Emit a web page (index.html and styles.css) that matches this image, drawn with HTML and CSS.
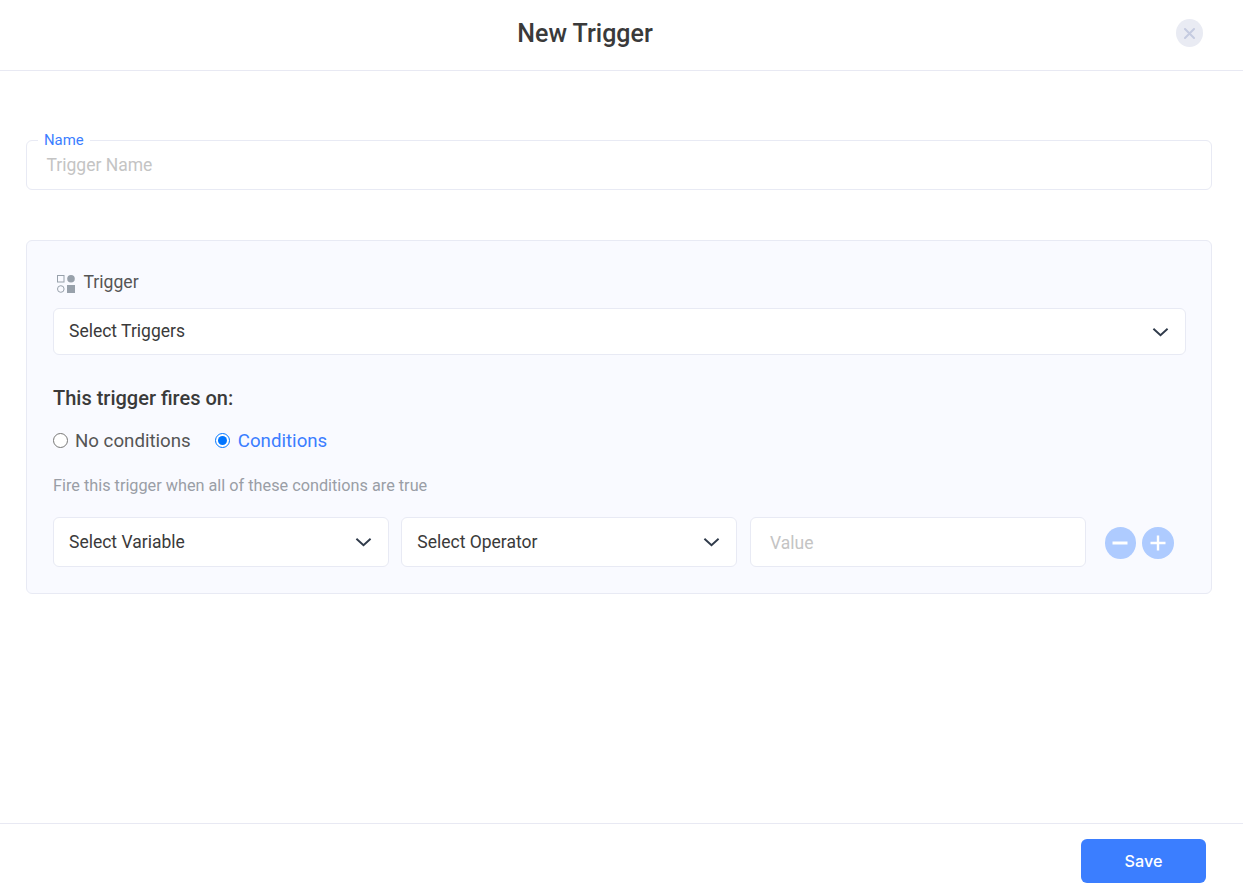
FILE: index.html
```html
<!DOCTYPE html>
<html lang="en">
<head>
<meta charset="utf-8">
<title>New Trigger</title>
<link rel="stylesheet" href="styles.css">
</head>
<body>
<div class="modal">
  <header class="modal-header">
    <h1 class="modal-title">New Trigger</h1>
    <button class="close-btn" type="button" aria-label="Close">
      <svg width="11" height="11" viewBox="0 0 11 11"><path d="M1 1l9 9M10 1l-9 9" stroke="#c5cbe0" stroke-width="2" fill="none" stroke-linecap="round"/></svg>
    </button>
  </header>
  <main class="modal-body">
    <div class="name-field">
      <span class="name-label">Name</span>
      <span class="name-placeholder">Trigger Name</span>
    </div>
    <section class="panel">
      <div class="panel-heading">
        <svg class="panel-icon" width="18" height="18" viewBox="0 0 18 18">
          <rect x="0.5" y="0.5" width="6.5" height="6.5" fill="none" stroke="#98a1ab"/>
          <circle cx="14" cy="3.8" r="3.8" fill="#98a1ab"/>
          <circle cx="3.8" cy="14" r="3.3" fill="none" stroke="#98a1ab"/>
          <rect x="10" y="10" width="8" height="8" fill="#98a1ab"/>
        </svg>
        <span>Trigger</span>
      </div>
      <div class="select select-wide">
        <span>Select Triggers</span>
        <svg class="chevron" width="17" height="10" viewBox="0 0 18 10"><path d="M1.5 1.5L9 8.5l7.5-7" fill="none" stroke="#2f3a4a" stroke-width="2"/></svg>
      </div>
      <h2 class="fires-title">This trigger fires on:</h2>
      <div class="radio-row">
        <label class="radio"><input class="radio-input" type="radio" name="fires">No conditions</label>
        <label class="radio radio-on"><input class="radio-input" type="radio" name="fires" checked>Conditions</label>
      </div>
      <p class="hint">Fire this trigger when all of these conditions are true</p>
      <div class="condition-row">
        <div class="select select-cell">
          <span>Select Variable</span>
          <svg class="chevron" width="17" height="10" viewBox="0 0 18 10"><path d="M1.5 1.5L9 8.5l7.5-7" fill="none" stroke="#2f3a4a" stroke-width="2"/></svg>
        </div>
        <div class="select select-cell">
          <span>Select Operator</span>
          <svg class="chevron" width="17" height="10" viewBox="0 0 18 10"><path d="M1.5 1.5L9 8.5l7.5-7" fill="none" stroke="#2f3a4a" stroke-width="2"/></svg>
        </div>
        <div class="value-cell">Value</div>
        <div class="round-actions">
          <button class="round-btn" type="button" aria-label="Remove">
            <svg width="16" height="16" viewBox="0 0 16 16"><path d="M0.5 8h15" stroke="#fff" stroke-width="3"/></svg>
          </button>
          <button class="round-btn" type="button" aria-label="Add">
            <svg width="16" height="16" viewBox="0 0 16 16"><path d="M0.5 8h15M8 0.5v15" stroke="#fff" stroke-width="2.4"/></svg>
          </button>
        </div>
      </div>
    </section>
  </main>
  <footer class="modal-footer">
    <button class="save-btn" type="button">Save</button>
  </footer>
</div>
</body>
</html>
```
FILE: styles.css
```css
* { box-sizing: border-box; }
html, body { margin: 0; height: 100%; }
body { background: #fff; font-family: Roboto, "Liberation Sans", sans-serif; color: #333; overflow: hidden; }
button { font: inherit; border: 0; padding: 0; cursor: pointer; }

.modal { display: flex; flex-direction: column; height: 893px; }

.modal-header { flex: 0 0 71px; display: flex; align-items: center; justify-content: center; border-bottom: 1px solid #e8e9f3; position: relative; padding-right: 73px; padding-bottom: 3px; }
.modal-title { margin: 0; font-size: 25px; line-height: 32px; font-weight: 500; color: #3a3a3a; }
.close-btn { position: absolute; left: 1176px; top: 19px; width: 27px; height: 28px; border-radius: 50%; background: #e9ebf3; display: flex; align-items: center; justify-content: center; }

.modal-body { flex: 1; padding: 69px 31px 0 26px; }

.name-field { position: relative; height: 50px; border: 1px solid #e8eaf4; border-radius: 6px; padding: 0 19.5px; display: flex; align-items: center; }
.name-label { position: absolute; left: 11px; top: -9px; padding: 0 6px; background: #fff; font-size: 14.9px; line-height: 17px; color: #3b7eff; }
.name-placeholder { font-size: 17.5px; color: #c4c4c4; }

.panel { margin-top: 50px; height: 354px; padding: 29px 25px 0 26px; background: #f9faff; border: 1px solid #e8eaf4; border-radius: 6px; }
.panel-heading { display: flex; align-items: center; gap: 8.5px; height: 24px; padding-left: 4px; font-size: 17.6px; line-height: 23px; color: #555; }
.panel-icon { margin-top: 3px; flex: none; }

.select { display: flex; align-items: center; justify-content: space-between; background: #fff; border: 1px solid #e8eaf4; font-size: 17.5px; color: #3a3a3a; border-radius: 6px; }
.select-wide { margin-top: 14px; height: 47px; padding: 0 16px 2px 15px; }
.select-wide .chevron { margin-top: 2px; }
.chevron { flex: none; }

.fires-title { margin: 31px 0 0; font-size: 20px; line-height: 24px; font-weight: 500; color: #3a3a3a; }

.radio-row { display: flex; gap: 24px; margin-top: 19px; }
.radio { display: flex; align-items: center; gap: 7px; font-size: 18.7px; line-height: 24px; color: #555; }
.radio-input { width: 15px; height: 15px; margin: 0 0 2px; flex: none; }
.radio-on { color: #3b7eff; gap: 8px; }

.hint { margin: 23px 0 0; font-size: 16.25px; line-height: 20px; color: #9a9ea6; }

.condition-row { display: flex; align-items: center; margin-top: 21px; }
.select-cell { width: 336px; height: 50px; margin-right: 12.3px; padding: 0 16px 0 15px; }
.value-cell { width: 336px; height: 50px; background: #fff; border: 1px solid #e8eaf4; border-radius: 6px; padding: 2px 19.5px 0; display: flex; align-items: center; font-size: 17.5px; color: #c4c4c4; }
.round-actions { display: flex; gap: 6px; margin: 2px 0 0 19px; }
.round-btn { width: 31.5px; height: 32px; border-radius: 50%; background: #aecbff; display: flex; align-items: center; justify-content: center; }

.modal-footer { flex: 0 0 70px; border-top: 1px solid #e8e9f3; padding: 15px 37px 0 0; display: flex; justify-content: flex-end; align-items: flex-start; }
.save-btn { width: 125px; height: 44px; border-radius: 6px; background: #3b7eff; color: #fff; font-family: Inter, Roboto, sans-serif; font-size: 16.2px; font-weight: 500; }
```
